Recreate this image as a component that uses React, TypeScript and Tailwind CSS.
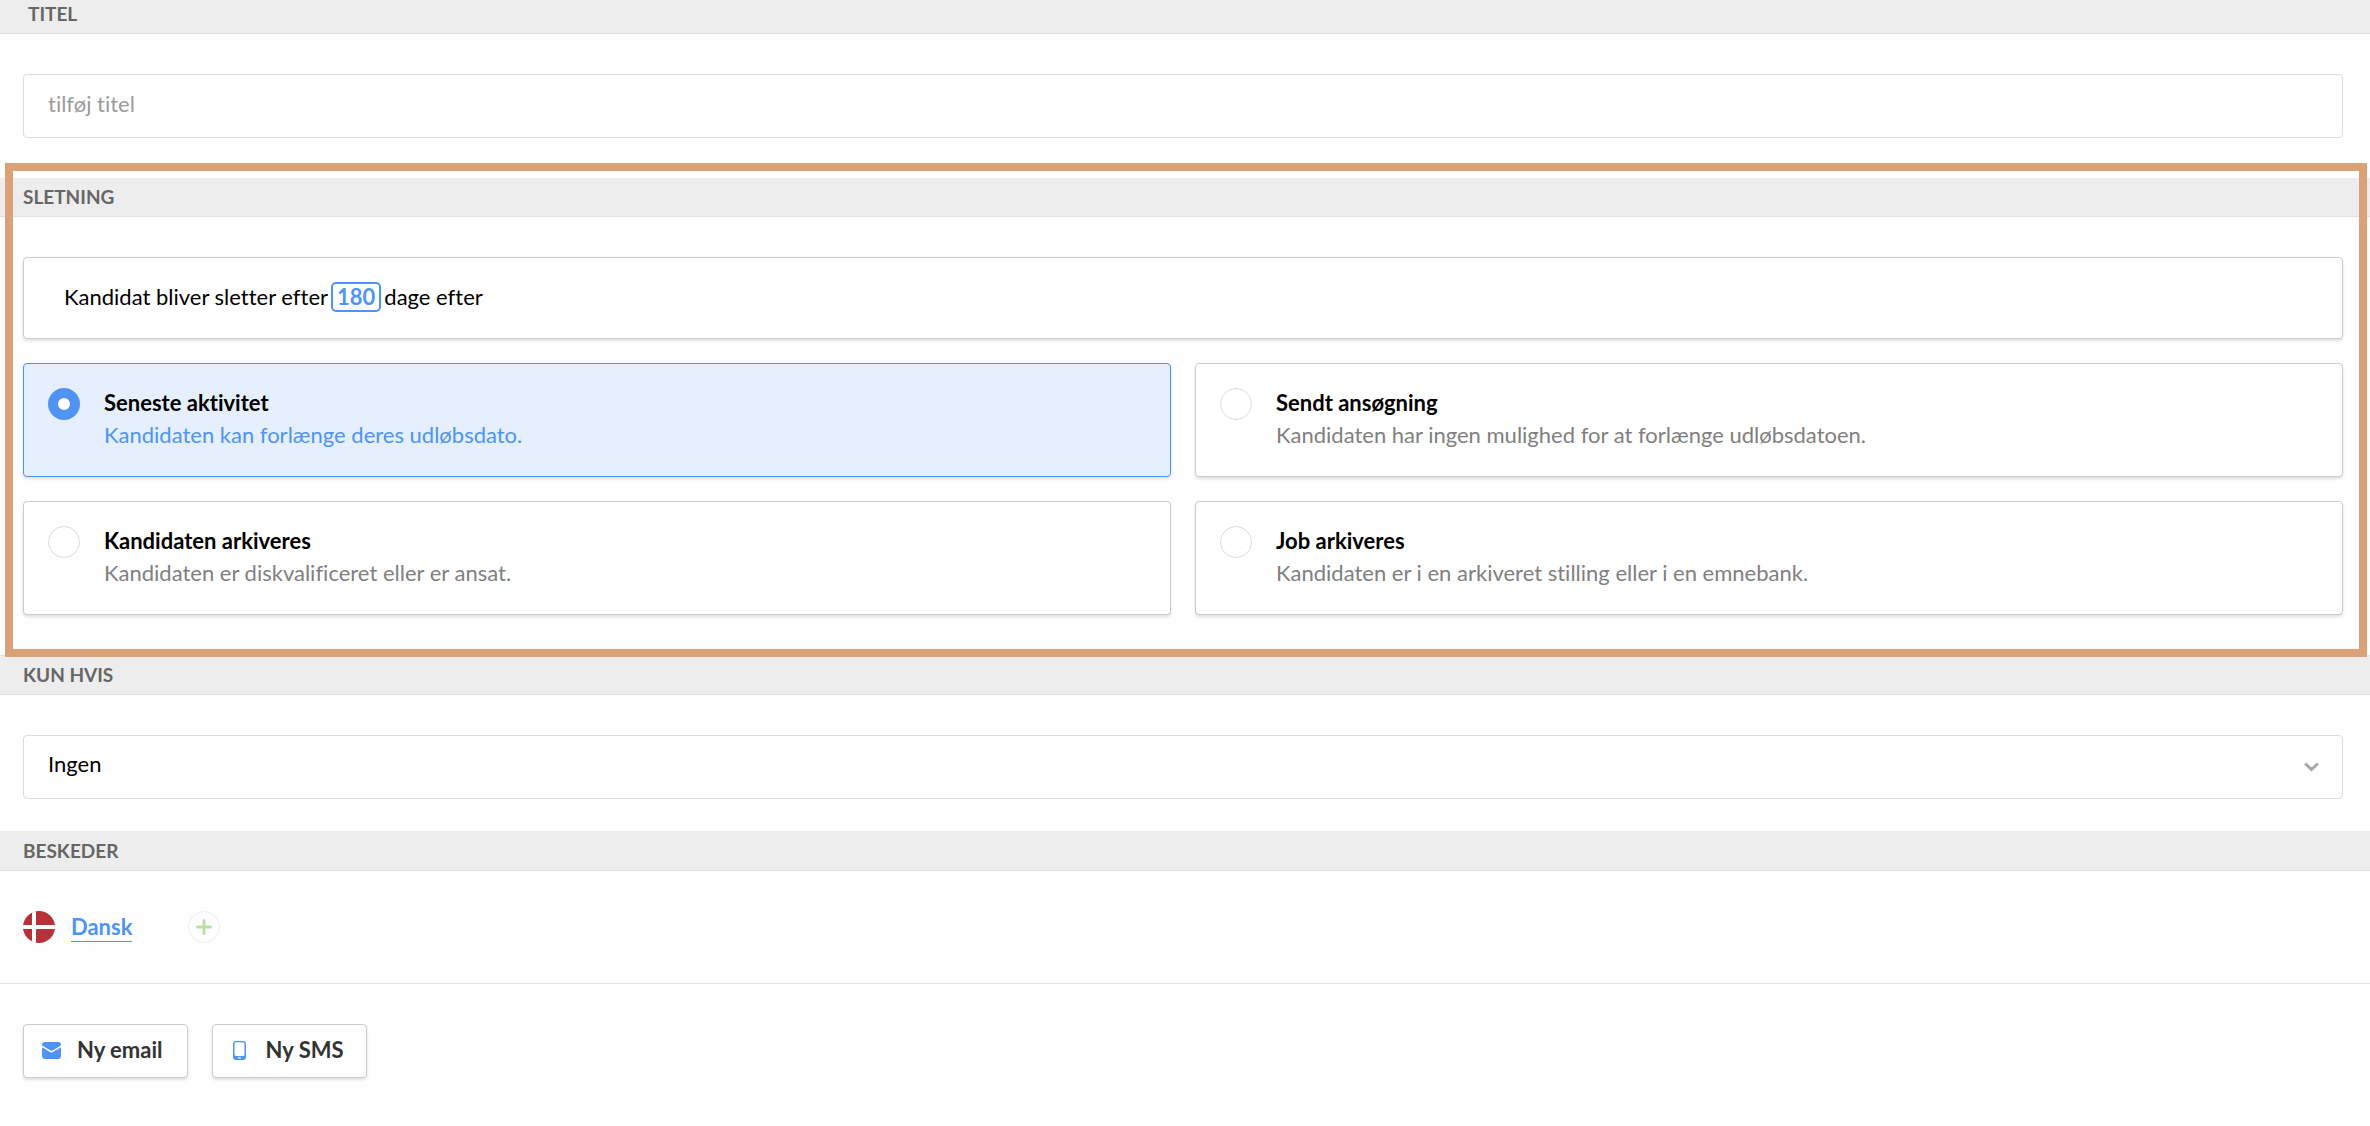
import { useState } from 'react';
import type { ReactNode } from 'react';

interface DeletionOption {
  id: string;
  title: string;
  description: string;
}

const deletionOptions: DeletionOption[] = [
  {
    id: 'activity',
    title: 'Seneste aktivitet',
    description: 'Kandidaten kan forlænge deres udløbsdato.',
  },
  {
    id: 'application',
    title: 'Sendt ansøgning',
    description: 'Kandidaten har ingen mulighed for at forlænge udløbsdatoen.',
  },
  {
    id: 'candidate-archived',
    title: 'Kandidaten arkiveres',
    description: 'Kandidaten er diskvalificeret eller er ansat.',
  },
  {
    id: 'job-archived',
    title: 'Job arkiveres',
    description: 'Kandidaten er i en arkiveret stilling eller i en emnebank.',
  },
];

interface SectionHeadingProps {
  children: ReactNode;
  className?: string;
}

const SectionHeading = ({ children, className = 'h-10 px-[23px]' }: SectionHeadingProps) => (
  <h2
    className={`flex items-center border-b border-[#e2e2e2] bg-[#ededed] text-[19px] leading-6 font-bold text-[#666666] ${className}`}
  >
    {children}
  </h2>
);

const DanishFlag = () => (
  <svg className="size-8" viewBox="0 0 32 32" aria-hidden="true">
    <clipPath id="flag-circle">
      <circle cx="16" cy="16" r="16" />
    </clipPath>
    <g clipPath="url(#flag-circle)">
      <rect width="32" height="32" fill="#b53238" />
      <rect x="9" width="4" height="32" fill="#fff" />
      <rect y="14" width="32" height="4" fill="#fff" />
    </g>
  </svg>
);

const MailIcon = () => (
  <svg className="h-[17px] w-[19px]" viewBox="0 0 19 17" aria-hidden="true">
    <path
      fill="#4f94f5"
      d="M3 0h13a3 3 0 0 1 3 3v.6l-9.5 5.5L0 3.6V3a3 3 0 0 1 3-3ZM0 5.3l9.5 5.5L19 5.3V14a3 3 0 0 1-3 3H3a3 3 0 0 1-3-3Z"
    />
  </svg>
);

const PhoneIcon = () => (
  <svg className="h-[19px] w-[13px]" viewBox="0 0 13 19" aria-hidden="true">
    <path
      fill="#4f94f5"
      fillRule="evenodd"
      d="M3 0h7a3 3 0 0 1 3 3v13a3 3 0 0 1-3 3H3a3 3 0 0 1-3-3V3a3 3 0 0 1 3-3Zm0 1.2A1.5 1.5 0 0 0 1.5 2.7v10.8A1.5 1.5 0 0 0 3 15h7a1.5 1.5 0 0 0 1.5-1.5V2.7A1.5 1.5 0 0 0 10 1.2ZM5 16.2v.6a.6.6 0 0 0 .6.6h1.8a.6.6 0 0 0 .6-.6v-.6Z"
    />
  </svg>
);

const App = () => {
  const [title, setTitle] = useState('');
  const [selected, setSelected] = useState('activity');
  const [condition, setCondition] = useState('none');

  return (
    <main className="min-h-screen bg-[#fefefe] font-[Lato,sans-serif] text-[22px] leading-8 text-black [font-variant-ligatures:none]">
      <section>
        <SectionHeading className="h-[34px] px-7 pb-1.5">TITEL</SectionHeading>
        <div className="pt-10 pr-[27px] pl-[23px]">
          <input
            type="text"
            aria-label="Titel"
            value={title}
            onChange={(event) => setTitle(event.target.value)}
            placeholder="tilføj titel"
            className="block h-16 w-full rounded-[4px] border border-[#dddddd] bg-white px-6 pb-1.5 outline-none placeholder:text-[#9b9b9b]"
          />
        </div>
      </section>

      <section className="relative mt-10 pb-10">
        {/* highlight frame around the deletion rules */}
        <div className="pointer-events-none absolute -top-[15px] right-[3px] -bottom-0.5 left-[5px] z-10 border-8 border-[#dba277]" />
        <SectionHeading className="h-[39px] px-[23px]">SLETNING</SectionHeading>
        <div className="pt-10 pr-[27px] pl-[23px]">
          <div className="flex h-[82px] items-center rounded-[4px] border border-[#cccccc] bg-white px-10 pb-0.5 shadow-[0_2px_3px_rgba(0,0,0,0.12)]">
            <span>Kandidat bliver sletter efter</span>
            <button
              type="button"
              className="mx-[3px] h-[30px] rounded-[5px] border-2 border-[#4f94f5] px-1 leading-[26px] font-bold text-[#4f94f5]"
            >
              180
            </button>
            <span>dage efter</span>
          </div>

          <div className="mt-6 grid grid-cols-2 gap-6">
            {deletionOptions.map((option) => {
              const active = option.id === selected;
              return (
                <label
                  key={option.id}
                  className={`flex h-[114px] cursor-pointer items-start gap-6 rounded-[4px] border px-6 pt-[23px] shadow-[0_2px_3px_rgba(0,0,0,0.12)] ${
                    active ? 'border-[#4f94f5] bg-[#e5effe]' : 'border-[#cccccc] bg-white'
                  }`}
                >
                  <input
                    type="radio"
                    name="deletion"
                    checked={active}
                    onChange={() => setSelected(option.id)}
                    className="mt-px size-8 shrink-0 appearance-none rounded-full border border-[#dddddd] bg-white checked:border-10 checked:border-[#4f94f5]"
                  />
                  <span className="flex flex-col">
                    <span className="font-bold">{option.title}</span>
                    <span className={active ? 'text-[#4f94f5]' : 'text-[#808080]'}>{option.description}</span>
                  </span>
                </label>
              );
            })}
          </div>
        </div>
      </section>

      <section>
        <SectionHeading className="h-10 border-t px-[23px]">KUN HVIS</SectionHeading>
        <div className="pt-10 pr-[27px] pl-[23px]">
          <div className="grid items-center">
            <select
              aria-label="Kun hvis"
              value={condition}
              onChange={(event) => setCondition(event.target.value)}
              className="col-start-1 row-start-1 h-16 w-full appearance-none rounded-[4px] border border-[#dddddd] bg-white px-6 pb-1.5 outline-none"
            >
              <option value="none">Ingen</option>
            </select>
            <svg
              className="pointer-events-none col-start-1 row-start-1 mr-6 h-[10px] w-[15px] justify-self-end"
              viewBox="0 0 15 10"
              aria-hidden="true"
            >
              <path d="M1.2 1.5 7.5 7.5l6.3-6" fill="none" stroke="#a6a6a6" strokeWidth="3" />
            </svg>
          </div>
        </div>
      </section>

      <section className="mt-8">
        <SectionHeading>BESKEDER</SectionHeading>
        <div className="flex h-[113px] items-center border-b border-[#e2e2e2] px-[23px]">
          <DanishFlag />
          <a href="#dansk" className="ml-4 border-b border-[#4f94f5] leading-7 font-bold text-[#4f94f5]">
            Dansk
          </a>
          <button
            type="button"
            aria-label="Tilføj sprog"
            className="ml-14 flex size-8 items-center justify-center rounded-full border border-[#eeeeee]"
          >
            <svg className="size-4" viewBox="0 0 16 16" aria-hidden="true">
              <path d="M8 1.5v13M1.5 8h13" stroke="#bbdfa9" strokeWidth="3" strokeLinecap="round" />
            </svg>
          </button>
        </div>
        <div className="flex gap-6 px-[23px] py-10">
          <button
            type="button"
            className="flex h-[54px] items-center gap-4 rounded-[4px] border border-[#cccccc] bg-white pr-6 pb-0.5 pl-[18px] font-bold text-[#333333] shadow-[0_2px_3px_rgba(0,0,0,0.12)]"
          >
            <MailIcon />
            Ny email
          </button>
          <button
            type="button"
            className="flex h-[54px] items-center gap-5 rounded-[4px] border border-[#cccccc] bg-white pr-[22px] pb-0.5 pl-5 font-bold text-[#333333] shadow-[0_2px_3px_rgba(0,0,0,0.12)]"
          >
            <PhoneIcon />
            Ny SMS
          </button>
        </div>
      </section>
    </main>
  );
};

export default App;
